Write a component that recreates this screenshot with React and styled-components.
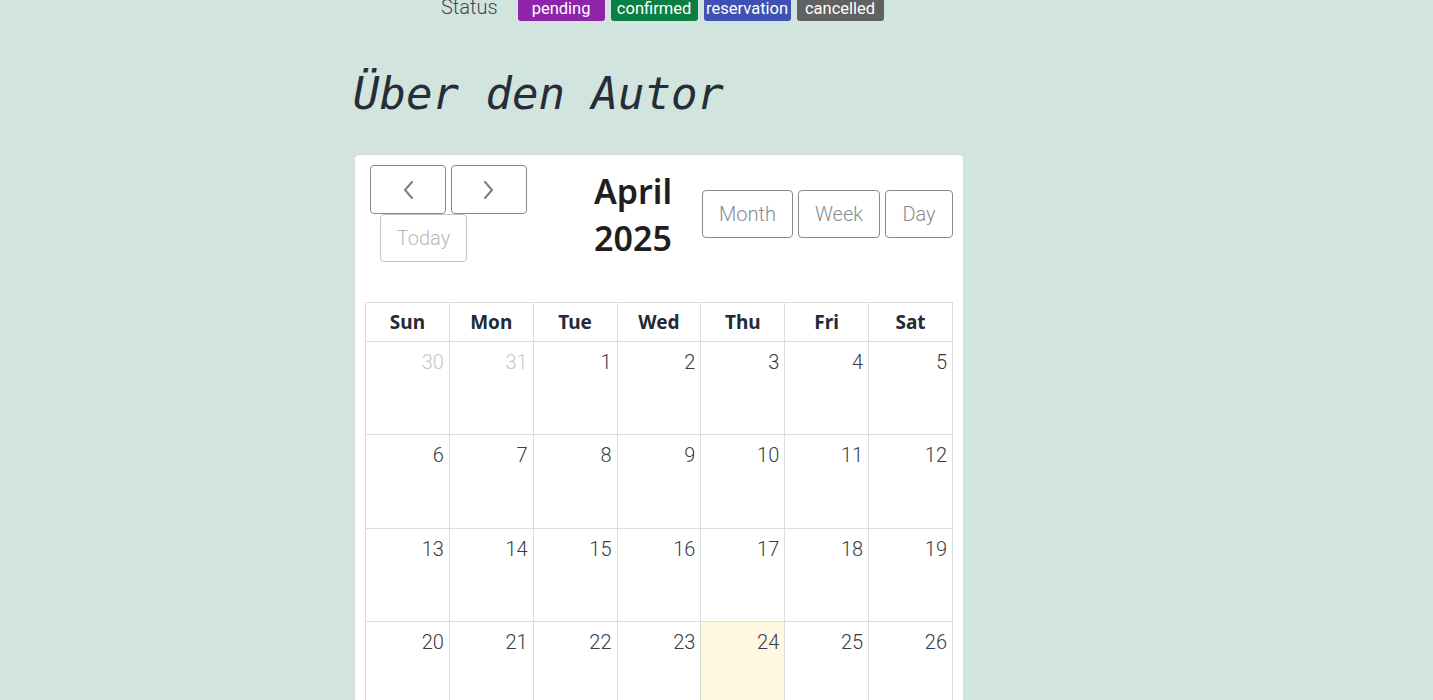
import React from "react";
import styled, { createGlobalStyle } from "styled-components";

const Global = createGlobalStyle`
  html, body { margin: 0; padding: 0; background: #d1e4de; }
  body { font-family: Roboto, "Liberation Sans", sans-serif; overflow: hidden; }
`;

const Page = styled.div`
  padding-left: 354px;
  width: 610px;
`;

const StatusRow = styled.div`
  display: flex;
  align-items: center;
  margin-top: -5px;
  padding-left: 87px;
  gap: 6px;
`;

const StatusLabel = styled.span`
  font-size: 20px;
  font-weight: 300;
  color: #3c4654;
  margin-right: 14px;
  line-height: 26px;
  position: relative;
  top: -1px;
`;

const Badge = styled.span`
  display: inline-flex;
  justify-content: center;
  align-items: flex-end;
  box-sizing: border-box;
  width: 87px;
  height: 26px;
  padding-bottom: 3px;
  border-radius: 3px;
  background: ${(p) => p.$bg};
  color: #fff;
  font-size: 16.5px;
  font-weight: 400;
  white-space: nowrap;
  overflow: hidden;
`;

const Heading = styled.h1`
  margin: 46px 0 34px -1px;
  font-family: "DejaVu Sans Mono", monospace;
  font-style: italic;
  font-weight: 400;
  font-size: 44px;
  line-height: 53px;
  color: #272d38;
`;

const Card = styled.div`
  background: #fff;
  border: 1px solid #d9d9d9;
  border-radius: 5px;
  padding: 10px;
  min-height: 600px;
`;

const Toolbar = styled.div`
  display: grid;
  grid-template-columns: 194px 138px 1fr;
  align-items: center;
  padding-left: 5px;
  margin-bottom: 40px;
`;

const LeftGroup = styled.div`
  display: flex;
  flex-wrap: wrap;
`;

const Btn = styled.button`
  box-sizing: border-box;
  height: ${(p) => p.$h || 48}px;
  width: ${(p) => p.$w}px;
  padding: 0;
  margin: ${(p) => p.$m || "0"};
  background: #fff;
  border: 1px solid ${(p) => (p.disabled ? "#c4c4c4" : "#8a8a8a")};
  border-radius: 4px;
  font-family: Roboto, sans-serif;
  font-weight: 300;
  font-size: 20px;
  color: ${(p) => (p.disabled ? "#b9b9b9" : "#8a8c90")};
  display: inline-flex;
  align-items: center;
  justify-content: center;
  cursor: pointer;
`;

const Title = styled.h2`
  margin: 0;
  text-align: center;
  font-family: "Noto Sans", "Open Sans", sans-serif;
  font-weight: 600;
  font-size: 34px;
  line-height: 47px;
  color: #1e1e1e;
  position: relative;
  top: 1px;
`;

const RightGroup = styled.div`
  display: flex;
  justify-content: flex-end;
  gap: 5px;
`;

const Table = styled.table`
  width: 100%;
  border-collapse: collapse;
  table-layout: fixed;
`;

const Th = styled.th`
  height: 38px;
  border: 1px solid #dcdcdc;
  font-family: "Noto Sans", "Open Sans", sans-serif;
  font-weight: 700;
  font-size: 19px;
  color: #222a36;
  padding: 0;
`;

const Td = styled.td`
  height: 93.4px;
  border: 1px solid #dcdcdc;
  vertical-align: top;
  text-align: right;
  padding: 8px 5px 0 0;
  font-family: Roboto, sans-serif;
  font-weight: 300;
  font-size: 20px;
  color: ${(p) => (p.$off ? "#c6c6c6" : "#363b45")};
  background: ${(p) => (p.$today ? "#fef8e0" : "#fff")};
  box-sizing: border-box;
`;

const Chevron = ({ dir }) => (
  <svg width="14" height="18" viewBox="0 0 14 18" fill="none">
    <polyline
      points={dir === "left" ? "11,1 4,9 11,17" : "3,1 10,9 3,17"}
      stroke="#7a8088"
      strokeWidth="2"
      strokeLinecap="round"
      strokeLinejoin="round"
    />
  </svg>
);

const badges = [
  { label: "pending", bg: "#8e24aa" },
  { label: "confirmed", bg: "#0b7f43" },
  { label: "reservation", bg: "#3f51b5" },
  { label: "cancelled", bg: "#616161" },
];

const views = [
  { label: "Month", w: 91 },
  { label: "Week", w: 82 },
  { label: "Day", w: 68 },
];

const days = ["Sun", "Mon", "Tue", "Wed", "Thu", "Fri", "Sat"];

const weeks = [
  [30, 31, 1, 2, 3, 4, 5],
  [6, 7, 8, 9, 10, 11, 12],
  [13, 14, 15, 16, 17, 18, 19],
  [20, 21, 22, 23, 24, 25, 26],
  [27, 28, 29, 30, 1, 2, 3],
];

export default function App() {
  return (
    <>
      <Global />
      <Page>
        <StatusRow>
          <StatusLabel>Status</StatusLabel>
          {badges.map((b) => (
            <Badge key={b.label} $bg={b.bg}>
              {b.label}
            </Badge>
          ))}
        </StatusRow>
        <Heading>Über den Autor</Heading>
        <Card>
          <Toolbar>
            <LeftGroup>
              <Btn $w={76} $h={49} $m="0 5px 0 0" aria-label="previous">
                <Chevron dir="left" />
              </Btn>
              <Btn $w={76} $h={49} aria-label="next">
                <Chevron dir="right" />
              </Btn>
              <Btn $w={87} $h={48} $m="0 0 0 10px" disabled>
                Today
              </Btn>
            </LeftGroup>
            <Title>April 2025</Title>
            <RightGroup>
              {views.map((v) => (
                <Btn key={v.label} $w={v.w}>
                  {v.label}
                </Btn>
              ))}
            </RightGroup>
          </Toolbar>
          <Table>
            <thead>
              <tr>
                {days.map((d) => (
                  <Th key={d}>{d}</Th>
                ))}
              </tr>
            </thead>
            <tbody>
              {weeks.map((w, wi) => (
                <tr key={wi}>
                  {w.map((d, di) => {
                    const off = (wi === 0 && d > 20) || (wi === 4 && d < 10);
                    const today = wi === 3 && d === 24;
                    return (
                      <Td key={di} $off={off} $today={today}>
                        {d}
                      </Td>
                    );
                  })}
                </tr>
              ))}
            </tbody>
          </Table>
        </Card>
      </Page>
    </>
  );
}
